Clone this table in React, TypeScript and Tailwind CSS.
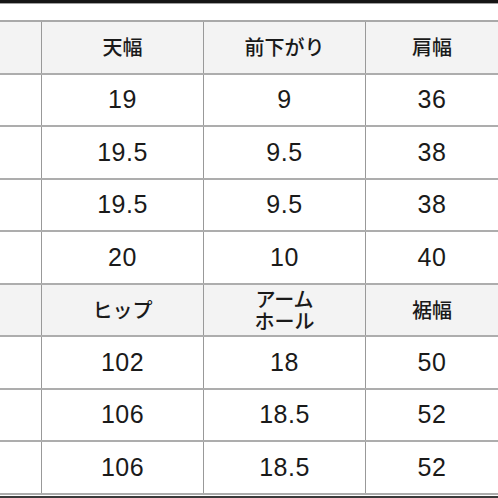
const rows: { head?: boolean; cells: string[] }[] = [
  { head: true, cells: ["", "天幅", "前下がり", "肩幅"] },
  { cells: ["", "19", "9", "36"] },
  { cells: ["", "19.5", "9.5", "38"] },
  { cells: ["", "19.5", "9.5", "38"] },
  { cells: ["", "20", "10", "40"] },
  { head: true, cells: ["", "ヒップ", "アーム\nホール", "裾幅"] },
  { cells: ["", "102", "18", "50"] },
  { cells: ["", "106", "18.5", "52"] },
  { cells: ["", "106", "18.5", "52"] },
];

const widths = ["w-[42px]", "w-[162px]", "w-[162px]", "w-[132px]"];

export default function App() {
  return (
    <div
      className="w-[498px] h-[498px] overflow-hidden bg-white text-[#1a1a1a]"
      style={{ fontFamily: '"Liberation Sans", "Noto Sans CJK JP", sans-serif' }}
    >
      <div className="h-[3px] bg-[#151515]" />
      <div className="h-px bg-[#a0a0a0]" />
      <div className="h-[16px]" />

      <div className="border-t-2 border-[#a9a9a9]">
        {rows.map((row, i) => (
          <div
            key={i}
            className={`flex h-[52.5px] border-b-2 border-[#adadad] ${row.head ? "bg-[#f3f3f3]" : "bg-white"}`}
          >
            {row.cells.map((cell, j) => (
              <div
                key={j}
                className={`${widths[j]} flex shrink-0 items-center justify-center text-center ${j < 3 ? "border-r border-[#999]" : ""}`}
              >
                {row.head ? (
                  <span
                    className="whitespace-pre text-[20px] leading-[22px] font-medium text-[#1a1a1a]"
                    style={{ fontFamily: '"Noto Sans CJK JP", sans-serif' }}
                  >
                    {cell}
                  </span>
                ) : (
                  <span className="text-[25px] leading-none tracking-[0.5px]">{cell}</span>
                )}
              </div>
            ))}
          </div>
        ))}
      </div>

      <div className="h-px" />
      <div className="h-[2px] bg-[#3a3a3a]" />
    </div>
  );
}
